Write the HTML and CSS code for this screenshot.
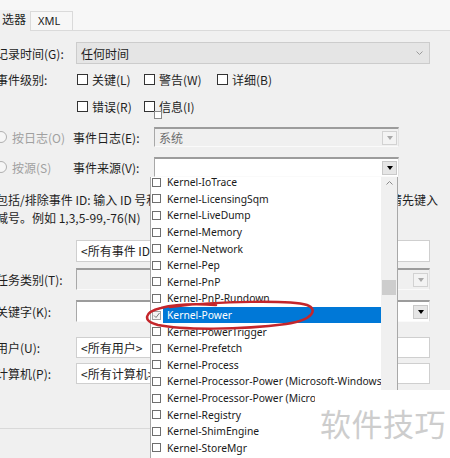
FILE: index.html
```html
<!DOCTYPE html>
<html lang="zh-CN">
<head>
    <meta charset="UTF-8">
    <title>筛选当前日志</title>

    <link rel="stylesheet" href="styles.css">

</head>
<body>

<div class="screen">
    <div class="tab-bar">
        <div class="tab tab-on">选器</div>
        <div class="tab tab-xml">XML</div>
        <div class="tab-rest"></div>
    </div>

    <div class="panel">
        <div class="row row-time">
            <span class="label">记录时间(G):</span>
            <div class="combo-flat">
                <span>任何时间</span>
                <svg class="chevron" width="7" height="4" viewBox="0 0 7 4"><polyline points="0.5,0.5 3.5,3.5 6.5,0.5" fill="none" stroke="#9a9a9a" stroke-width="1"/></svg>
            </div>
        </div>

        <div class="row row-level">
            <span class="label">事件级别:</span>
            <label class="check check-a"><span class="box"></span>关键(L)</label>
            <label class="check check-b"><span class="box"></span>警告(W)</label>
            <label class="check"><span class="box"></span>详细(B)</label>
        </div>
        <div class="row row-level2">
            <label class="check check-a"><span class="box"></span>错误(R)</label>
            <label class="check"><span class="box"></span>信息(I)</label>
            <span class="stray"></span>
        </div>

        <div class="row row-log">
            <span class="radio"></span>
            <span class="radio-text">按日志(O)</span>
            <span class="sub-label">事件日志(E):</span>
            <div class="combo combo-off combo-short">
                <span>系统</span>
                <span class="drop-btn drop-off"></span>
            </div>
        </div>
        <div class="row row-src">
            <span class="radio"></span>
            <span class="radio-text">按源(S)</span>
            <span class="sub-label">事件来源(V):</span>
            <div class="combo combo-short">
                <span></span>
                <span class="drop-btn"></span>
            </div>
        </div>

        <div class="hint">
            <div class="hint-line">
                <span class="hint-main">包括/排除事件 ID: 输入 ID 号和/或 ID 范围，使用逗号分隔。若要排除条件，</span>
                <span>请先键入</span>
            </div>
            <div>减号。例如 1,3,5-99,-76(N)</div>
        </div>

        <div class="row row-ids">
            <div class="field">&lt;所有事件 ID&gt;</div>
        </div>
        <div class="row row-task">
            <span class="label">任务类别(T):</span>
            <div class="combo combo-off">
                <span></span>
                <span class="drop-btn drop-off"></span>
            </div>
        </div>
        <div class="row row-key">
            <span class="label">关键字(K):</span>
            <div class="combo">
                <span></span>
                <span class="drop-btn"></span>
            </div>
        </div>
        <div class="row row-user">
            <span class="label">用户(U):</span>
            <div class="field">&lt;所有用户&gt;</div>
        </div>
        <div class="row row-pc">
            <span class="label">计算机(P):</span>
            <div class="field">&lt;所有计算机&gt;</div>
        </div>

        <div class="divider"></div>
    </div>

    <!-- 事件来源 下拉列表 -->
    <div class="drop-list">
        <ul class="items">
            <li class="item"><span class="tick"></span>Kernel-IoTrace</li>
            <li class="item"><span class="tick"></span>Kernel-LicensingSqm</li>
            <li class="item"><span class="tick"></span>Kernel-LiveDump</li>
            <li class="item"><span class="tick"></span>Kernel-Memory</li>
            <li class="item"><span class="tick"></span>Kernel-Network</li>
            <li class="item"><span class="tick"></span>Kernel-Pep</li>
            <li class="item"><span class="tick"></span>Kernel-PnP</li>
            <li class="item"><span class="tick"></span>Kernel-PnP-Rundown</li>
            <li class="item item-on">
                <span class="tick tick-on"><svg width="7" height="7" viewBox="0 0 7 7"><polyline points="1,3.5 3,5.5 6.5,1" fill="none" stroke="#7a7a7a" stroke-width="1"/></svg></span>
                <span class="name">Kernel-Power</span>
            </li>
            <li class="item"><span class="tick"></span>Kernel-PowerTrigger</li>
            <li class="item"><span class="tick"></span>Kernel-Prefetch</li>
            <li class="item"><span class="tick"></span>Kernel-Process</li>
            <li class="item"><span class="tick"></span>Kernel-Processor-Power (Microsoft-Windows-Kernel-Processor-Power)</li>
            <li class="item"><span class="tick"></span>Kernel-Processor-Power (Microsoft-Windows-Kernel-Power)</li>
            <li class="item"><span class="tick"></span>Kernel-Registry</li>
            <li class="item"><span class="tick"></span>Kernel-ShimEngine</li>
            <li class="item"><span class="tick"></span>Kernel-StoreMgr</li>
        </ul>
        <div class="scroll">
            <svg class="scroll-up" width="7" height="4" viewBox="0 0 7 4"><polyline points="0.5,3.5 3.5,0.5 6.5,3.5" fill="none" stroke="#8a8a8a" stroke-width="1"/></svg>
            <div class="thumb"></div>
        </div>
    </div>

    <svg class="ring" width="450" height="458" viewBox="0 0 450 458">
        <path d="M170 307 C 220 301, 290 300, 307 305 C 318 309, 314 320, 286 324 C 240 330, 182 330, 158 325 C 142 321, 144 312, 161 308 C 176 304, 200 304, 216 305" fill="none" stroke="#c4262b" stroke-width="2.5" stroke-linecap="round"/>
    </svg>

    <div class="watermark">软件技巧</div>
</div>

</body>
</html>
```

FILE: styles.css
```css
* {
    box-sizing: border-box;
}

body {
    margin: 0;
    background: #f0f0f0;
    font-family: "Noto Sans CJK SC", "Noto Sans", sans-serif;
    font-size: 12px;
    color: #1e1e1e;
}

.screen {
    position: relative;
    width: 450px;
    height: 458px;
    overflow: hidden;
    background: #f0f0f0;
}

/* tabs */
.tab-bar {
    height: 31px;
    display: flex;
    align-items: flex-end;
    background: #f7f7f7;
}
.tab {
    height: 20px;
    line-height: 18px;
}
.tab-on {
    width: 30px;
    height: 21px;
    padding-left: 2px;
    background: #f0f0f0;
}
.tab-xml {
    width: 43px;
    padding-left: 7px;
    border: 1px solid #dadada;
    font-family: "Noto Sans", sans-serif;
    font-size: 11px;
    color: #222;
}
.tab-rest {
    flex: 1;
    border-bottom: 1px solid #dadada;
}

/* form rows */
.row {
    display: flex;
    align-items: center;
    height: 22px;
    white-space: nowrap;
}
.label {
    flex: none;
    width: 80px;
    margin-left: -4px;
}
.row-time   { margin-top: 11px; }
.row-level  { margin-top: 4px; }
.row-level2 { margin-top: 5px; padding-left: 77px; position: relative; }
.row-log    { margin-top: 9px; }
.row-src    { margin-top: 8px; }
.row-ids    { margin-top: 13px; padding-left: 76px; }
.row-task   { margin-top: 6px; }
.row-key    { margin-top: 10px; }
.row-user   { margin-top: 15px; height: 21px; }
.row-pc     { margin-top: 5px; height: 21px; }

.row-level .label {
    width: 81px;
}

.combo-flat {
    display: flex;
    align-items: center;
    width: 354px;
    height: 22px;
    padding: 0 5px 0 4px;
    background: #e5e5e5;
    border: 1px solid #cccccc;
}
.chevron {
    margin-left: auto;
    margin-right: 1px;
}

.check {
    display: flex;
    align-items: center;
}
.check-a { width: 67px; }
.check-b { width: 73px; }
.box {
    width: 11px;
    height: 11px;
    margin-right: 4px;
    background: #fff;
    border: 1px solid #333;
}
.stray {
    position: absolute;
    left: 154px;
    top: 16px;
    width: 8px;
    height: 8px;
    border: 1px solid #8a8a8a;
    background: #fff;
}

.radio {
    flex: none;
    width: 12px;
    height: 12px;
    margin-left: -5px;
    border: 1px solid #b0b0b0;
    border-radius: 50%;
    background: #f6f6f6;
}
.radio-text {
    width: 61px;
    margin-left: 5px;
    color: #a0a0a0;
}
.sub-label {
    width: 81px;
}

.combo {
    display: flex;
    align-items: center;
    width: 354px;
    height: 22px;
    padding-left: 4px;
    background: #fff;
    border-top: 2px solid #9c9c9c;
    border-left: 1px solid #a8a8a8;
    border-right: 1px solid #e2e2e2;
    border-bottom: 1px solid #fafafa;
}
.combo-short {
    width: 245px;
    height: 20px;
}
.combo-off {
    background: #f0f0f0;
    color: #6d6d6d;
}
.drop-btn {
    display: flex;
    align-items: center;
    justify-content: center;
    width: 15px;
    height: 14px;
    margin-left: auto;
    margin-right: 1px;
    background: #e6e6e6;
    border: 1px solid #c9c9c9;
}
.drop-btn::after {
    content: "";
    border-left: 3.5px solid transparent;
    border-right: 3.5px solid transparent;
    border-top: 4px solid #000;
}
.drop-off {
    background: #f3f3f3;
    border-color: #d2d2d2;
}
.drop-off::after {
    border-top-color: #a8a8a8;
}

.hint {
    margin: 13px 0 0 -4px;
    width: 442px;
    line-height: 18px;
    white-space: nowrap;
}
.hint-line {
    display: flex;
}
.hint-main {
    flex: 1;
    min-width: 0;
    overflow: hidden;
}

.field {
    width: 354px;
    height: 100%;
    padding-left: 4px;
    line-height: 20px;
    background: #fff;
    border: 1px solid #cfcfcf;
}

.divider {
    margin-top: 44px;
    border-top: 1px solid #d9d9d9;
}

/* dropdown list */
.drop-list {
    position: absolute;
    left: 150px;
    top: 177px;
    width: 248px;
    height: 290px;
    display: flex;
    background: #fff;
    border: 1px solid #a8a8a8;
    border-top: none;
    overflow: hidden;
}
.items {
    flex: 1;
    min-width: 0;
    margin: -3px 0 0;
    padding: 0;
    list-style: none;
    font-family: "Noto Sans", sans-serif;
    font-size: 10.3px;
    color: #1a1a1a;
}
.item {
    display: flex;
    align-items: center;
    height: 16.6px;
    padding-left: 1px;
    white-space: nowrap;
    overflow: hidden;
}
.tick {
    flex: none;
    width: 9px;
    height: 9px;
    margin-right: 6px;
    border: 1px solid #6e6e6e;
}
.tick-on {
    margin-right: 2px;
    display: flex;
    align-items: center;
    justify-content: center;
    border-color: #a0a0a0;
    background: #f4f4f4;
}
.item-on .name {
    flex: 1;
    height: 16px;
    line-height: 16px;
    padding-left: 4px;
    color: #fff;
    background: #0078d7;
}
.scroll {
    position: relative;
    flex: none;
    width: 16px;
    background: #f0f0f0;
}
.scroll-up {
    position: absolute;
    left: 5px;
    top: 4px;
}
.thumb {
    position: absolute;
    left: 1px;
    top: 103px;
    width: 14px;
    height: 15px;
    background: #cdcdcd;
}

.ring {
    position: absolute;
    left: 0;
    top: 0;
    pointer-events: none;
}

.watermark {
    position: absolute;
    left: 315px;
    top: 390px;
    right: 0;
    bottom: 0;
    padding: 16px 0 0 5px;
    background: #fff;
    font-size: 31px;
    line-height: 34px;
    color: #cdcdcd;
    letter-spacing: 0.5px;
}
```
